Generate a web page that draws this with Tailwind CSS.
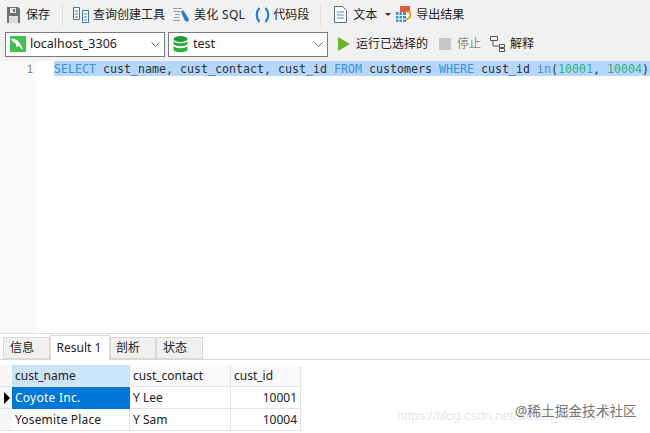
<!DOCTYPE html>
<html lang="en">
<head>
<meta charset="UTF-8">
<title>Query</title>
<script src="https://cdn.jsdelivr.net/npm/@tailwindcss/browser@4"></script>
</head>
<body class="w-[650px] h-[433px] overflow-hidden bg-white relative font-['Noto_Sans','Noto_Sans_CJK_SC',sans-serif] text-[12px] text-[#222]">
  <!-- toolbar -->
  <div class="h-[61px] bg-[#f1f1f1] flex flex-col">
    <div class="h-[29px] flex items-center">
      <div class="flex items-center gap-[6px] pl-[7px] w-[62px]">
        <svg width="13" height="16" viewBox="0 0 13 16"><path d="M0 0h11l2 2v14H0z" fill="#6f6f6f"/><path d="M3 1h6v5H3z" fill="#e8e8e8"/><path d="M6 2h2v3H6z" fill="#6f6f6f"/><path d="M2 9h9v7H2z" fill="#dcdcdc"/></svg>
        <span>保存</span>
      </div>
      <div class="w-px h-[22px] bg-[#ddd]"></div>
      <div class="flex items-center gap-[4px] ml-[10px]">
        <svg width="16" height="16" viewBox="0 0 16 16" fill="none"><path d="M.5.500h6v12h-6z" fill="#fff" stroke="#2d7fc4"/><path d="M9.500 3.500h6v12h-6z" fill="#fff" stroke="#2d7fc4"/><path d="M2 4h3M2 7h3M2 10h3M11 7h3M11 10h3M11 13h3" stroke="#666"/></svg>
        <span>查询创建工具</span>
      </div>
      <div class="flex items-center gap-[4px] ml-[8px]">
        <svg width="17" height="16" viewBox="0 0 17 16" fill="none"><path d="M0 1.500h9M1 4.500h7M2 7.500h5M1 10.500h5M0 13.500h7" stroke="#999"/><path d="M8 5l2-2 6 9-1 3-3-1z" fill="#2d7fc4"/></svg>
        <span class="tracking-[.3px]">美化 SQL</span>
      </div>
      <div class="flex items-center gap-[3px] ml-[10px]">
        <svg width="15" height="16" viewBox="0 0 15 16" fill="none" stroke="#1e7ed8" stroke-width="2.200"><path d="M4.500 1C.8 5 .8 11 4.500 15"/><path d="M10.500 1c3.700 4 3.700 10 0 14"/></svg>
        <span>代码段</span>
      </div>
      <div class="w-px h-[22px] bg-[#ddd] ml-[11px]"></div>
      <div class="flex items-center gap-[6px] ml-[13px]">
        <svg width="13" height="17" viewBox="0 0 13 17" fill="none"><path d="M.5.500h8l4 4v12H.5z" fill="#fff" stroke="#5b6b7b"/><path d="M3 6h7M3 9h7M3 12h7" stroke="#3f8fd0"/></svg>
        <span>文本</span>
      </div>
      <div class="ml-[8px] w-0 h-0 border-x-[3px] border-x-transparent border-t-[3px] border-t-[#333]"></div>
      <div class="flex items-center gap-[4px] ml-[5px]">
        <svg width="16" height="17" viewBox="0 0 16 17" fill="none"><path d="M4 0h10v6H4z" fill="#d9603b"/><path d="M0 6h10v10H0z" fill="#3f8fd0"/><path d="M3 6v10M6.500 6v10M0 9.500h10M0 13h10" stroke="#fff"/><path d="M11 6h3v5l-4 3" stroke="#f0a030" stroke-width="2"/></svg>
        <span>导出结果</span>
      </div>
    </div>
    <div class="h-[30px] flex items-center pl-[5px] gap-[3px]">
      <div class="w-[160px] h-[25px] bg-white border border-[#7a7a7a] flex items-center px-[4px] gap-[4px]">
        <svg width="16" height="16" viewBox="0 0 16 16"><path d="M0 0h16v16H0z" fill="#3fc24f"/><path d="M1 3c5-1 9 2 12 11-2-1-3-3-4-4l-3 1 0-3C4 7 2 5 1 3z" fill="#fff"/></svg>
        <span class="flex-1 text-[12.500px]">localhost_3306</span>
        <svg width="9" height="5" viewBox="0 0 9 5" fill="none"><path d="M.5.500l4 4 4-4" stroke="#666"/></svg>
      </div>
      <div class="w-[160px] h-[25px] bg-white border border-[#7a7a7a] flex items-center px-[4px] gap-[5px]">
        <svg width="15" height="17" viewBox="0 0 15 17"><ellipse cx="7.500" cy="3" rx="7" ry="3" fill="#1f9a2f"/><path d="M.5 5c2 3 12 3 14 0v3c-2 3-12 3-14 0zM.5 10c2 3 12 3 14 0v4c-2 3-12 3-14 0z" fill="#2fae3f"/></svg>
        <span class="flex-1 text-[12.500px]">test</span>
        <svg width="9" height="5" viewBox="0 0 9 5" fill="none"><path d="M.5.500l4 4 4-4" stroke="#666"/></svg>
      </div>
      <div class="flex items-center gap-[6px] ml-[7px]">
        <svg width="12" height="14" viewBox="0 0 12 14"><path d="M0 0l12 7-12 7z" fill="#6cb52d"/></svg>
        <span>运行已选择的</span>
      </div>
      <div class="flex items-center gap-[6px] ml-[8px] text-[#888]">
        <div class="w-[12px] h-[12px] bg-[#c8c8c8]"></div>
        <span>停止</span>
      </div>
      <div class="flex items-center gap-[4px] ml-[6px]">
        <svg width="16" height="16" viewBox="0 0 16 16" fill="none" stroke="#555"><path d="M.5.500h7v4h-7zM9.500 8.500h5v3h-5zM9.500 12.500h5v3h-5zM3 5v5h6"/></svg>
        <span>解释</span>
      </div>
    </div>
  </div>
  <!-- editor -->
  <div class="h-[272px] flex">
    <div class="w-[36px] bg-[#f9f9f9] text-right pr-[2px] text-[#888] font-['DejaVu_Sans_Mono'] text-[11px] leading-[17px]"><div class="pr-[1px]">1</div></div>
    <div class="flex-1 pl-[18px]">
      <div class="h-[15px] bg-[#b5d7fb] font-['DejaVu_Sans_Mono'] text-[11.630px] leading-[17px] whitespace-pre text-[#333] overflow-hidden"><span class="text-[#3e8fe0]">SELECT</span> cust_name, cust_contact, cust_id <span class="text-[#3e8fe0]">FROM</span> customers <span class="text-[#3e8fe0]">WHERE</span> cust_id <span class="text-[#3e8fe0]">in</span>(<span class="text-[#2fb380]">10001</span>, <span class="text-[#2fb380]">10004</span>)</div>
    </div>
  </div>
  <!-- tabs -->
  <div class="h-[100px] bg-white border-t border-[#ddd]">
    <div class="h-[26px] flex items-end pl-[3px] border-b border-[#d9d9d9]">
      <div class="w-[47px] h-[22px] bg-[#f0f0f0] border border-[#d9d9d9] flex items-center pl-[6px]">信息</div>
      <div class="w-[60px] h-[25px] bg-white border-x border-t border-[#d9d9d9] -mb-px flex items-center justify-center pr-[2px]">Result 1</div>
      <div class="w-[46px] h-[22px] bg-[#f0f0f0] border border-[#d9d9d9] flex items-center pl-[5px]">剖析</div>
      <div class="w-[47px] h-[22px] bg-[#f0f0f0] border border-[#d9d9d9] flex items-center pl-[6px]">状态</div>
    </div>
    <div class="grid grid-cols-[12px_118px_101px_70px] grid-rows-[22px_22px_22px] w-[301px] mt-[5px]">
      <div class="bg-[#f7f7f7] border-b border-[#e3e3e3]"></div>
      <div class="bg-[#cce4f7] border-b border-[#e3e3e3] flex items-center pl-[3px]">cust_name</div>
      <div class="bg-[#f9f9f9] border-b border-r border-[#e3e3e3] flex items-center pl-[3px]">cust_contact</div>
      <div class="bg-[#f9f9f9] border-b border-r border-[#e3e3e3] flex items-center pl-[3px]">cust_id</div>
      <div class="bg-[#f7f7f7] border-b border-[#e3e3e3] flex items-center pl-[4px]"><div class="w-0 h-0 border-y-[6px] border-y-transparent border-l-[6px] border-l-black"></div></div>
      <div class="bg-[#0078d7] text-white flex items-center pl-[3px] tracking-[.25px]">Coyote Inc.</div>
      <div class="border-b border-r border-[#e3e3e3] flex items-center pl-[3px]">Y Lee</div>
      <div class="border-b border-r border-[#e3e3e3] flex items-center justify-end pr-[3px]">10001</div>
      <div class="bg-[#f7f7f7] border-b border-[#e3e3e3]"></div>
      <div class="border-b border-r border-[#e3e3e3] flex items-center pl-[3px] tracking-[.15px]">Yosemite Place</div>
      <div class="border-b border-r border-[#e3e3e3] flex items-center pl-[3px]">Y Sam</div>
      <div class="border-b border-r border-[#e3e3e3] flex items-center justify-end pr-[3px]">10004</div>
    </div>
  </div>
  <!-- watermarks -->
  <div class="absolute left-[397px] top-[406px] text-[#e8e8e8] text-[13px] font-['Liberation_Sans'] whitespace-nowrap">https://blog.csdn.net/weixin_43852066</div>
  <div class="absolute left-[515px] top-[401px] text-[#777] text-[13.700px] whitespace-nowrap">@稀土掘金技术社区</div>
</body>
</html>
